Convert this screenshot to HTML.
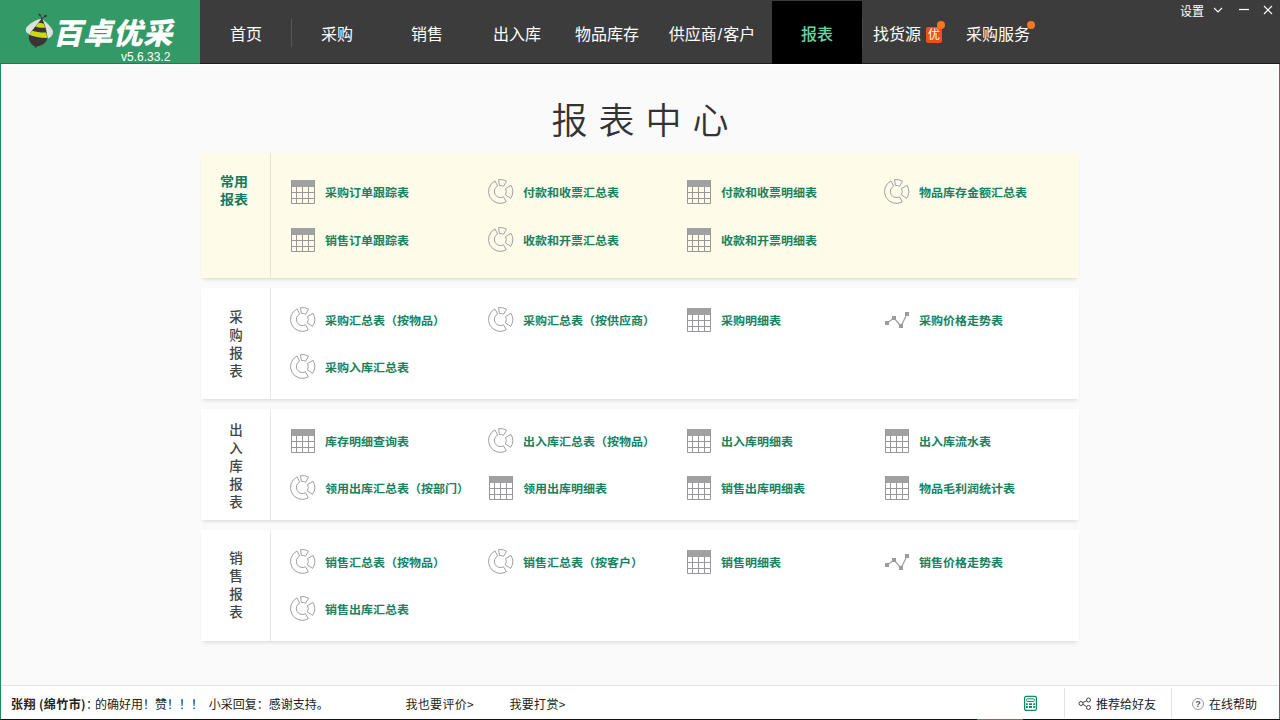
<!DOCTYPE html>
<html lang="zh-CN">
<head>
<meta charset="utf-8">
<title>报表中心</title>
<style>
*{box-sizing:border-box;margin:0;padding:0}
html,body{width:1280px;height:720px;overflow:hidden}
body{position:relative;background:#fafafa;font-family:"Liberation Sans","Noto Sans CJK SC",sans-serif;font-size:12px;color:#222}
.abs{position:absolute}
#frame-l{left:0;top:64px;width:2px;height:656px;background:linear-gradient(90deg,#1b8c56 1px,#fff 1px)}
#frame-r{left:1278px;top:64px;width:2px;height:656px;background:linear-gradient(90deg,#fff 1px,#1b8c56 1px)}
#frame-t{left:1px;top:64px;width:1278px;height:2px;background:#fff}
#frame-b{left:0;top:719px;width:1280px;height:1px;background:#111}
#frame-b2{left:977px;top:719px;width:46px;height:1px;background:#c8561a}
#hdr{left:0;top:0;width:1280px;height:64px;background:#3c3c3c;border-bottom:1px solid #1c1c1c}
#logo{left:0;top:0;width:200px;height:64px;background:#339966;border-bottom:1px solid #0f8349}
#logotxt{left:51px;top:8.800px;font-family:"Noto Sans CJK SC",sans-serif;font-weight:900;font-size:29.500px;line-height:44px;color:#fff;transform:skewX(-13deg);transform-origin:left bottom;letter-spacing:0.500px;white-space:nowrap}
#ver{left:121px;top:50px;font-size:12px;line-height:14px;color:#fff;white-space:nowrap}
.nav{top:0;height:64px;line-height:69px;text-align:center;color:#fff;font-size:16px;white-space:nowrap}
.nav.act{background:linear-gradient(#3c3c3c 1px,#000 1px);color:#63d6a2;font-weight:500}
#navsep{left:291px;top:18px;width:1px;height:29px;background:#565656}
.badge{left:926px;top:26.500px;width:16px;height:16px;background:#ee4f17;color:#fff;font-size:12px;line-height:16px;text-align:center;border-radius:2px}
.dot{width:8px;height:8px;border-radius:50%;background:#fb7522}
#title{left:0;top:90.500px;width:1280px;text-align:center;font-family:"Noto Sans CJK SC",sans-serif;font-weight:350;font-size:36px;line-height:54px;letter-spacing:11px;padding-left:11px;color:#333}
.card{left:201px;width:878px;background:#fff;box-shadow:0 0 1px rgba(0,0,0,.03),0 3px 4px -2px rgba(0,0,0,.15)}
.card.y{background:#fefbe8}
.vline{left:270px;width:1px;background:rgba(0,0,0,.09)}
.lab{left:201px;width:70px;text-align:center;font-size:13.500px;line-height:18px;color:#444;font-weight:500;font-family:"Noto Sans CJK SC",sans-serif}
.lab.g{color:#157a60;font-weight:bold;font-size:14px;left:199px;transform:scaleY(.93);line-height:19.3px}
.it{transform:scaleY(.95);transform-origin:0 50%;height:24px;line-height:24px;font-size:12px;font-weight:bold;color:#178162;white-space:nowrap;font-family:"Noto Sans CJK SC",sans-serif}
.ic{width:26px;height:26px}
#foot{left:1px;top:685px;width:1277px;height:34px;background:#fff;border-top:1px solid #e2e2e2}
.ft{top:696px;line-height:16px;font-size:12px;color:#222;white-space:nowrap;font-family:"Noto Sans CJK SC",sans-serif}
.fsep{top:688px;width:1px;height:30px;background:#e2e2e2}
</style>
</head>
<body>
<svg width="0" height="0" style="position:absolute">
 <defs>
  <g id="i-table">
   <rect x="0" y="0" width="24" height="7" fill="#a1a1a1"/>
   <path d="M0.500 0.500V23.500H23.500V0.500M5.500 7V24M11.500 7V24M17.500 7V24M0 12.500H24M0 18.500H24" stroke="#98989c" stroke-width="1" fill="none"/>
  </g>
  <g id="i-pie" fill="none" stroke="#a0a0a6" stroke-width="1" stroke-linejoin="round">
   <path d="M5.95 10.31A11.9 11.9 0 1 1 -5.40 -10.60L-2.77 -5.44A6.1 6.1 0 1 0 3.05 5.28Z"/>
   <path d="M-1.88 -11.85A12.0 12.0 0 0 1 6.18 -10.29L3.14 -5.23A6.1 6.1 0 0 0 -0.95 -6.02Z"/>
   <path d="M10.65 -6.15A12.3 12.3 0 0 1 10.20 6.88L4.89 3.30A5.9 5.9 0 0 0 5.11 -2.95Z"/>
  </g>
  <g id="i-line">
   <path d="M2 11L9 6L16 14L22 2" stroke="#a0a0a0" stroke-width="1.300" fill="none"/>
   <path d="M0 9h4v4h-4zM7 4h4v4h-4zM14 12h4v4h-4zM20 0h4v4h-4z" fill="#9b9b9b"/>
  </g>
 </defs>
</svg>

<div id="hdr" class="abs"></div>
<div id="logo" class="abs"></div>
<svg class="abs" style="left:16px;top:8px" width="50" height="48" viewBox="0 0 50 48">
 <path d="M25.20 10.87 C20.00 12.00 12.67 16.00 10.13 20.00 C9.00 22.67 10.67 25.67 13.67 26.13 Z" fill="#dfe1df"/>
 <path d="M26.53 11.20 C30.00 14.00 35.33 18.67 36.80 22.67 C37.67 26.00 35.33 29.33 31.87 30.53 Z" fill="#dfe1df"/>
 <path d="M25.53 10.80 C25.33 9.00 24.80 7.87 23.87 6.93 M26.47 10.93 C26.80 9.33 27.67 8.53 29.07 8.13" stroke="#3a3232" stroke-width="0.9" fill="none" stroke-linecap="round"/>
 <ellipse cx="23.73" cy="6.87" rx="1.400" ry="0.900" transform="rotate(40 23.73 6.87)" fill="#3a3232"/>
 <ellipse cx="29.33" cy="8.07" rx="1.600" ry="1" transform="rotate(-25 29.33 8.07)" fill="#3a3232"/>
 <path d="M25.87 10.87 C23.33 14.00 16.67 22.00 13.20 26.80 C11.67 31.33 14.33 36.33 19.00 38.53 L19.33 40.53 L20.80 38.53 C26.67 37.67 31.20 34.67 31.33 29.33 C30.80 22.67 28.67 15.33 25.87 10.87 Z" fill="#3c3434"/>
 <path d="M22.00 15.47 C24.00 14.80 26.33 15.00 27.87 15.87 L29.20 19.47 C26.00 20.00 22.00 19.33 19.33 18.40 Z" fill="#c9dc12"/>
 <path d="M16.20 22.67 C20.67 24.00 26.00 24.67 30.13 24.40 L31.33 29.87 C25.33 30.13 18.00 28.67 13.07 26.67 Z" fill="#c9dc12"/>
</svg>
<div id="logotxt" class="abs">百卓优采</div>
<div id="ver" class="abs">v5.6.33.2</div>

<div class="abs nav" style="left:200px;width:92px">首页</div>
<div id="navsep" class="abs"></div>
<div class="abs" style="left:862px;top:18px;width:1px;height:29px;background:#4a4a4a"></div>
<div class="abs nav" style="left:292px;width:90px">采购</div>
<div class="abs nav" style="left:382px;width:90px">销售</div>
<div class="abs nav" style="left:472px;width:90px">出入库</div>
<div class="abs nav" style="left:562px;width:90px">物品库存</div>
<div class="abs nav" style="left:652px;width:120px">供应商<span style="margin:0 1px">/</span>客户</div>
<div class="abs nav act" style="left:772px;width:90px">报表</div>
<div class="abs nav" style="left:873px;text-align:left">找货源</div>
<div class="abs badge">优</div>
<div class="abs dot" style="left:937px;top:21px"></div>
<div class="abs nav" style="left:966px;text-align:left">采购服务</div>
<div class="abs dot" style="left:1027px;top:21px"></div>

<div class="abs" style="left:1180px;top:2.500px;font-size:12px;line-height:16px;color:#fff;font-family:'Noto Sans CJK SC',sans-serif">设置</div>
<svg class="abs" style="left:1210px;top:0px" width="70" height="20" viewBox="1210 0 70 20" fill="none" stroke="#fff" stroke-width="1.200">
 <path d="M1214 8L1218 12L1222 8"/>
 <path d="M1239 9.500H1249"/>
 <path d="M1264 6L1272 14M1272 6L1264 14" stroke-width="1.100"/>
</svg>

<div id="title" class="abs">报表中心</div>

<!-- card 1 -->
<div class="abs card y" style="top:153px;height:125px"></div>
<div class="abs vline" style="top:153px;height:125px"></div>
<div class="abs lab g" style="top:170.600px">常用<br>报表</div>

<!-- card 2 -->
<div class="abs card" style="top:288px;height:111px"></div>
<div class="abs vline" style="top:288px;height:111px"></div>
<div class="abs lab" style="top:307.200px">采<br>购<br>报<br>表</div>
<!-- card 3 -->
<div class="abs card" style="top:409px;height:111px"></div>
<div class="abs vline" style="top:409px;height:111px"></div>
<div class="abs lab" style="top:419.500px">出<br>入<br>库<br>报<br>表</div>
<!-- card 4 -->
<div class="abs card" style="top:530px;height:111px"></div>
<div class="abs vline" style="top:530px;height:111px"></div>
<div class="abs lab" style="top:548.200px">销<br>售<br>报<br>表</div>

<div id="items">
<svg class="abs" style="left:291px;top:180px" width="24" height="24"><use href="#i-table"/></svg>
<div class="abs it" style="left:325px;top:179.8px">采购订单跟踪表</div>
<svg class="abs" style="left:486px;top:177px" width="29" height="29" viewBox="-14.4 -14.5 29 29"><use href="#i-pie"/></svg>
<div class="abs it" style="left:523px;top:179.8px">付款和收票汇总表</div>
<svg class="abs" style="left:687px;top:180px" width="24" height="24"><use href="#i-table"/></svg>
<div class="abs it" style="left:721px;top:179.8px">付款和收票明细表</div>
<svg class="abs" style="left:882px;top:177px" width="29" height="29" viewBox="-14.4 -14.5 29 29"><use href="#i-pie"/></svg>
<div class="abs it" style="left:919px;top:179.8px">物品库存金额汇总表</div>
<svg class="abs" style="left:291px;top:228px" width="24" height="24"><use href="#i-table"/></svg>
<div class="abs it" style="left:325px;top:227.8px">销售订单跟踪表</div>
<svg class="abs" style="left:486px;top:225px" width="29" height="29" viewBox="-14.4 -14.5 29 29"><use href="#i-pie"/></svg>
<div class="abs it" style="left:523px;top:227.8px">收款和开票汇总表</div>
<svg class="abs" style="left:687px;top:228px" width="24" height="24"><use href="#i-table"/></svg>
<div class="abs it" style="left:721px;top:227.8px">收款和开票明细表</div>
<svg class="abs" style="left:288px;top:305px" width="29" height="29" viewBox="-14.4 -14.5 29 29"><use href="#i-pie"/></svg>
<div class="abs it" style="left:325px;top:307.8px">采购汇总表（按物品）</div>
<svg class="abs" style="left:486px;top:305px" width="29" height="29" viewBox="-14.4 -14.5 29 29"><use href="#i-pie"/></svg>
<div class="abs it" style="left:523px;top:307.8px">采购汇总表（按供应商）</div>
<svg class="abs" style="left:687px;top:308px" width="24" height="24"><use href="#i-table"/></svg>
<div class="abs it" style="left:721px;top:307.8px">采购明细表</div>
<svg class="abs" style="left:885px;top:312px" width="24" height="16"><use href="#i-line"/></svg>
<div class="abs it" style="left:919px;top:307.8px">采购价格走势表</div>
<svg class="abs" style="left:288px;top:352px" width="29" height="29" viewBox="-14.4 -14.5 29 29"><use href="#i-pie"/></svg>
<div class="abs it" style="left:325px;top:354.8px">采购入库汇总表</div>
<svg class="abs" style="left:291px;top:429px" width="24" height="24"><use href="#i-table"/></svg>
<div class="abs it" style="left:325px;top:428.8px">库存明细查询表</div>
<svg class="abs" style="left:486px;top:426px" width="29" height="29" viewBox="-14.4 -14.5 29 29"><use href="#i-pie"/></svg>
<div class="abs it" style="left:523px;top:428.8px">出入库汇总表（按物品）</div>
<svg class="abs" style="left:687px;top:429px" width="24" height="24"><use href="#i-table"/></svg>
<div class="abs it" style="left:721px;top:428.8px">出入库明细表</div>
<svg class="abs" style="left:885px;top:429px" width="24" height="24"><use href="#i-table"/></svg>
<div class="abs it" style="left:919px;top:428.8px">出入库流水表</div>
<svg class="abs" style="left:288px;top:473px" width="29" height="29" viewBox="-14.4 -14.5 29 29"><use href="#i-pie"/></svg>
<div class="abs it" style="left:325px;top:475.8px">领用出库汇总表（按部门）</div>
<svg class="abs" style="left:489px;top:476px" width="24" height="24"><use href="#i-table"/></svg>
<div class="abs it" style="left:523px;top:475.8px">领用出库明细表</div>
<svg class="abs" style="left:687px;top:476px" width="24" height="24"><use href="#i-table"/></svg>
<div class="abs it" style="left:721px;top:475.8px">销售出库明细表</div>
<svg class="abs" style="left:885px;top:476px" width="24" height="24"><use href="#i-table"/></svg>
<div class="abs it" style="left:919px;top:475.8px">物品毛利润统计表</div>
<svg class="abs" style="left:288px;top:547px" width="29" height="29" viewBox="-14.4 -14.5 29 29"><use href="#i-pie"/></svg>
<div class="abs it" style="left:325px;top:549.8px">销售汇总表（按物品）</div>
<svg class="abs" style="left:486px;top:547px" width="29" height="29" viewBox="-14.4 -14.5 29 29"><use href="#i-pie"/></svg>
<div class="abs it" style="left:523px;top:549.8px">销售汇总表（按客户）</div>
<svg class="abs" style="left:687px;top:550px" width="24" height="24"><use href="#i-table"/></svg>
<div class="abs it" style="left:721px;top:549.8px">销售明细表</div>
<svg class="abs" style="left:885px;top:554px" width="24" height="16"><use href="#i-line"/></svg>
<div class="abs it" style="left:919px;top:549.8px">销售价格走势表</div>
<svg class="abs" style="left:288px;top:594px" width="29" height="29" viewBox="-14.4 -14.5 29 29"><use href="#i-pie"/></svg>
<div class="abs it" style="left:325px;top:596.8px">销售出库汇总表</div>
</div><!--items-end-->

<div id="foot" class="abs"></div>
<div class="abs ft" style="left:11px"><b style="letter-spacing:.400px">张翔 (绵竹市)</b><span style="margin-right:-3px">：</span>的确好用！赞！！！ <span style="margin-left:3px">小采回复：感谢支持。</span></div>
<div class="abs ft" style="left:405.500px;letter-spacing:.300px">我也要评价&gt;</div>
<div class="abs ft" style="left:509.500px;letter-spacing:.300px">我要打赏&gt;</div>
<svg class="abs" style="left:1023px;top:695px" width="15" height="17" viewBox="0 0 15 17">
 <rect x="1.600" y="1.400" width="11.800" height="14" rx="1.600" fill="none" stroke="#0f8a64" stroke-width="1.300"/>
 <rect x="3.600" y="3.800" width="7.800" height="2.700" rx="1" fill="none" stroke="#0f8a64" stroke-width="1"/>
 <path d="M3 8.200h1.800v1.800h-1.800zM6 8.200h3v1.800h-3zM10.200 8.200h1.800v1.800h-1.800zM3 11.100h1.800v1.800h-1.800zM6 11.100h3v1.800h-3zM10.200 11.100h1.800v1.800h-1.800z" fill="#0f8a64"/>
</svg>
<div class="abs fsep" style="left:1064px"></div>
<svg class="abs" style="left:1078px;top:697px" width="14" height="14" viewBox="0 0 14 14" fill="none" stroke="#444" stroke-width="1">
 <circle cx="3" cy="6.500" r="2"/><circle cx="10.500" cy="3" r="2"/><circle cx="10.500" cy="10.500" r="2"/><path d="M4.800 5.600L8.700 3.800M4.800 7.400L8.700 9.600"/>
</svg>
<div class="abs ft" style="left:1096px">推荐给好友</div>
<div class="abs fsep" style="left:1171px"></div>
<svg class="abs" style="left:1191px;top:697px" width="14" height="14" viewBox="0 0 14 14">
 <circle cx="7" cy="7" r="5.500" fill="none" stroke="#999" stroke-width="1"/>
 <text x="7" y="10.200" font-size="9" font-weight="bold" text-anchor="middle" fill="#555" font-family="Liberation Sans, sans-serif">?</text>
</svg>
<div class="abs ft" style="left:1209px">在线帮助</div>

<div id="frame-t" class="abs"></div>
<div id="frame-l" class="abs"></div>
<div id="frame-r" class="abs"></div>
<div id="frame-b" class="abs"></div>
<div id="frame-b2" class="abs"></div>
</body>
</html>
